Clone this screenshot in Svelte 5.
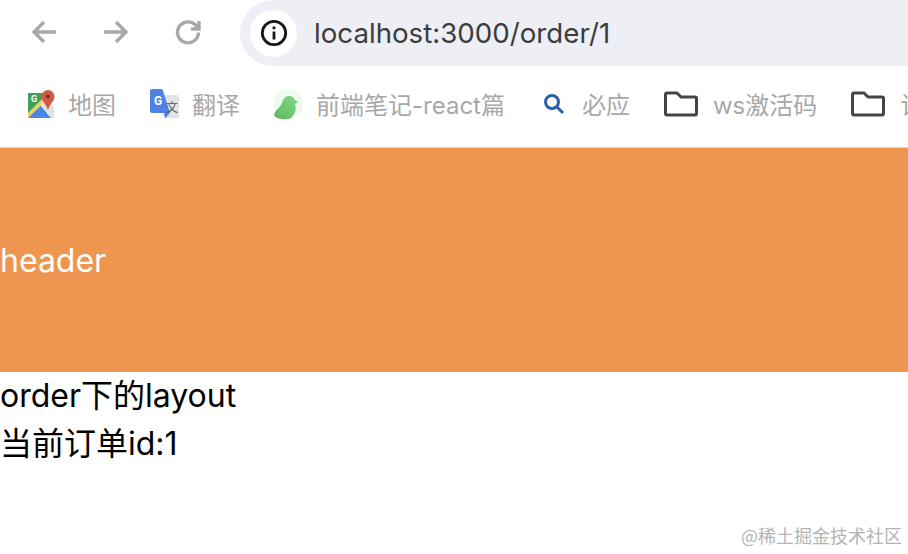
<script>
  const bookmarks = [
    { icon: 'maps', label: '地图' },
    { icon: 'translate', label: '翻译' },
    { icon: 'note', label: '前端笔记-react篇' },
    { icon: 'search', label: '必应' },
    { icon: 'folder', label: 'ws激活码' },
    { icon: 'folder', label: '记录' }
  ];
</script>

<div class="page">
  <div class="toolbar">
    <div class="nav">
      <svg width="28" height="28" viewBox="0 0 28 28"><path d="M26 14H4M14 4L4 14l10 10" /></svg>
      <svg width="28" height="28" viewBox="0 0 28 28"><path d="M2 14h22M14 4l10 10-10 10" /></svg>
      <svg width="28" height="28" viewBox="0 0 28 28"><path d="M24.500 14.500a10.500 10.500 0 1 1-3.200-7.700L24.500 10M25 3v8h-8" /></svg>
    </div>
    <div class="address">
      <span class="info">
        <svg width="28" height="28" viewBox="0 0 28 28">
          <circle cx="14" cy="14" r="11.700" fill="none" stroke="#161616" stroke-width="2.800" />
          <rect x="12.600" y="12.500" width="2.800" height="8" fill="#161616" />
          <rect x="12.600" y="7.500" width="2.800" height="2.800" fill="#161616" />
        </svg>
      </span>
      <span class="url">localhost:3000/order/1</span>
    </div>
  </div>

  <div class="bookmarks">
    {#each bookmarks as b}
      <div class="bookmark">
        {#if b.icon === 'maps'}
          <svg width="28" height="28" viewBox="0 0 28 28">
            <path d="M1 3h19v25H1z" fill="#3f9f5f" />
            <path d="M1 26l12-11 11 13H1z" fill="#4a86e8" />
            <path d="M1 23L19 5h3v3L1 28z" fill="#f0d256" />
            <path d="M13 15l6-6 8 8v11h-3z" fill="#e3e3e3" />
            <path d="M21 0a6.500 6.500 0 0 1 6.500 6.500c0 4.500-4 6.500-6.500 13.500-2.500-7-6.500-9-6.500-13.500A6.500 6.500 0 0 1 21 0z" fill="#cf5a46" />
            <circle cx="21" cy="6.500" r="2" fill="#8c2b20" />
            <text x="4" y="12" class="g">G</text>
          </svg>
        {:else if b.icon === 'translate'}
          <svg width="30" height="30" viewBox="0 0 30 30">
            <rect x="15" y="6" width="15" height="23" rx="2" fill="#e4e4e6" />
            <path d="M3 0h9a2 2 0 0 1 2 1.500L21 24l-5 5.500L15 24H3a2 2 0 0 1-2-2V2a2 2 0 0 1 2-2z" fill="#5082e6" />
            <text x="5" y="16" class="g big">G</text>
            <text x="17" y="23" class="wen">文</text>
          </svg>
        {:else if b.icon === 'note'}
          <svg width="30" height="32" viewBox="0 0 30 32">
            <defs>
              <linearGradient id="leaf" x1="0" y1="1" x2="1" y2="0">
                <stop offset="0" stop-color="#5fb85c" />
                <stop offset="1" stop-color="#7fd98a" />
              </linearGradient>
            </defs>
            <circle cx="15" cy="16" r="15" fill="#eefaf0" />
            <path d="M1 27c1-5 6-7 8-12 1-4 3-7 7-7 3 0 5 2 6 4l3 2-3 2c2 5 0 12-6 15-6 1-13 0-15-4z" fill="url(#leaf)" />
          </svg>
        {:else if b.icon === 'search'}
          <svg width="22" height="22" viewBox="0 0 22 22" class="search">
            <circle cx="9" cy="9" r="6.500" fill="none" stroke="#2a5fae" stroke-width="3" />
            <path d="M14 14l6 6" stroke="#2a5fae" stroke-width="3" fill="none" />
          </svg>
        {:else}
          <svg width="34" height="26" viewBox="0 0 34 26" class="folder">
            <path d="M3 2h10l4 4h14a1.500 1.500 0 0 1 1.500 1.500v15A1.500 1.500 0 0 1 31 24H3a1.500 1.500 0 0 1-1.500-1.500v-19A1.500 1.500 0 0 1 3 2z" fill="none" stroke="#454545" stroke-width="3" stroke-linejoin="round" />
          </svg>
        {/if}
        <span>{b.label}</span>
      </div>
    {/each}
  </div>

  <header class="banner">header</header>
  <div class="content">
    <div>order下的layout</div>
    <div>当前订单id:1</div>
  </div>
  <div class="mark">@稀土掘金技术社区</div>
</div>

<style>
  :global(body) {
    margin: 0;
    background: #fff;
  }

  .page {
    position: relative;
    width: 908px;
    height: 554px;
    overflow: hidden;
    font-family: Inter, "Noto Sans CJK SC", sans-serif;
  }

  .toolbar {
    display: flex;
    height: 66px;
    padding-left: 30px;
    box-sizing: border-box;
  }

  .nav {
    display: flex;
    align-items: center;
    gap: 44px;
    width: 210px;
    padding-bottom: 2px;
    box-sizing: border-box;
    flex-shrink: 0;
  }

  .nav path {
    fill: none;
    stroke: #a8a8a8;
    stroke-width: 3.400;
  }

  .address {
    flex: 1;
    display: flex;
    align-items: center;
    background: #edeff5;
    border-radius: 33px 0 0 33px;
    padding-left: 10px;
  }

  .info {
    display: flex;
    align-items: center;
    justify-content: center;
    width: 47px;
    height: 47px;
    border-radius: 50%;
    background: #fff;
  }

  .url {
    margin-left: 17px;
    font-size: 27.700px;
    color: #3c3c40;
  }

  .bookmarks {
    display: flex;
    align-items: center;
    height: 82px;
    padding-left: 27px;
    padding-bottom: 6px;
    box-sizing: border-box;
    border-bottom: 1px solid #d9d9d9;
    gap: 33px;
    white-space: nowrap;
  }

  .bookmark {
    display: flex;
    align-items: center;
    gap: 13px;
    font-size: 24px;
    color: #a8a8a8;
    flex-shrink: 0;
  }

  .search {
    margin: 0 4px 0 5px;
  }

  .folder {
    margin: 0 2px 0 1px;
  }

  .g {
    font-size: 9px;
    font-weight: 700;
    fill: #fff;
    font-family: Roboto, sans-serif;
  }

  .g.big {
    font-size: 12px;
  }

  .wen {
    font-size: 12px;
    fill: #555;
  }

  .banner {
    display: flex;
    align-items: center;
    height: 224px;
    background: #ee9650;
    color: #fff;
    font-size: 32px;
  }

  .content {
    font-size: 32px;
    line-height: 48px;
    color: #000;
  }

  .mark {
    position: absolute;
    right: 6px;
    bottom: 6px;
    font-size: 18px;
    color: #b4b4b4;
    font-family: "Noto Sans CJK SC", sans-serif;
  }
</style>
